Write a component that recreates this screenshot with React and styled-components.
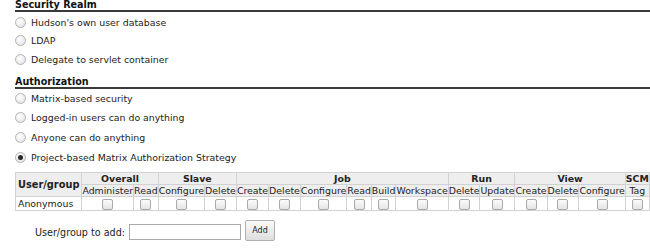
import React from "react";
import styled, { createGlobalStyle } from "styled-components";

const GlobalStyle = createGlobalStyle`
  html, body {
    margin: 0;
    padding: 0;
    background: #fff;
  }
  body {
    font-family: "DejaVu Sans", Verdana, sans-serif;
    font-size: 9.4px;
    color: #222;
  }
`;

const Page = styled.div`
  width: 650px;
  height: 249px;
  overflow: hidden;
  padding-left: 15px;
  box-sizing: border-box;
`;

const SectionHeader = styled.div`
  font-weight: bold;
  font-size: 9.6px;
  color: #111;
  padding-top: ${(p) => p.top || 0}px;
  height: 9px;
  line-height: 9px;
  border-bottom: 2px solid #3a3a3a;
  padding-bottom: 1px;
`;

const OptionList = styled.div`
  display: flex;
  flex-direction: column;
  gap: ${(p) => p.gap}px;
  padding-top: ${(p) => p.top}px;
`;

const Option = styled.label`
  display: flex;
  align-items: center;
  gap: 5px;
  height: 12px;
`;

const Radio = styled.span`
  width: 11px;
  height: 11px;
  border-radius: 50%;
  box-sizing: border-box;
  border: 1px solid #b4b4b4;
  background: radial-gradient(circle at 40% 35%, #ffffff 0%, #f1f1f1 45%, #dcdcdc 100%);
  display: flex;
  align-items: center;
  justify-content: center;
  flex: none;
  &::after {
    content: "";
    width: 5px;
    height: 5px;
    border-radius: 50%;
    background: ${(p) => (p.checked ? "#2a2a2a" : "transparent")};
  }
`;

const Matrix = styled.table`
  border-collapse: collapse;
  margin-top: 9px;
  font-size: 9.4px;
`;

const Th = styled.th`
  background: #eeeeee;
  border: 1px solid #d2d2d2;
  font-weight: ${(p) => (p.bold ? "bold" : "normal")};
  padding: 0;
  height: 11px;
  line-height: 11px;
  white-space: nowrap;
  color: #222;
`;

const UserHead = styled(Th)`
  font-weight: bold;
  font-size: 9.8px;
  padding: 0 2px;
`;

const Td = styled.td`
  border: 1px solid #d2d2d2;
  padding: 0;
  height: 13px;
  text-align: ${(p) => (p.left ? "left" : "center")};
  padding-left: ${(p) => (p.left ? "2px" : 0)};
  vertical-align: middle;
`;

const Check = styled.span`
  display: inline-block;
  width: 11px;
  height: 11px;
  box-sizing: border-box;
  border: 1px solid #a9a9a9;
  border-radius: 2px;
  background: linear-gradient(#fbfbfb, #e4e4e4);
  vertical-align: middle;
  margin-top: 1px;
`;

const AddRow = styled.div`
  display: flex;
  align-items: center;
  padding-left: 20px;
  margin-top: 12px;
  gap: 4px;
`;

const AddLabel = styled.span`
  font-size: 9.6px;
  color: #222;
`;

const TextBox = styled.input`
  width: 112px;
  height: 16px;
  box-sizing: border-box;
  border: 1px solid #a9a9a9;
  padding: 0 2px;
  font: inherit;
`;

const AddButton = styled.button`
  width: 30px;
  height: 21px;
  margin-top: -3px;
  box-sizing: border-box;
  border: 1px solid #b0b0b0;
  border-radius: 2px;
  background: linear-gradient(#fafafa, #dedede);
  font-family: "DejaVu Sans", Verdana, sans-serif;
  font-size: 8px;
  color: #222;
  padding: 0;
`;

const groups = [
  { name: "Overall", perms: ["Administer", "Read"] },
  { name: "Slave", perms: ["Configure", "Delete"] },
  { name: "Job", perms: ["Create", "Delete", "Configure", "Read", "Build", "Workspace"] },
  { name: "Run", perms: ["Delete", "Update"] },
  { name: "View", perms: ["Create", "Delete", "Configure"] },
  { name: "SCM", perms: ["Tag"] },
];

const allPerms = groups.flatMap((g) => g.perms.map((p) => ({ key: g.name + p, label: p })));

export default function App() {
  return (
    <Page>
      <GlobalStyle />
      <SectionHeader>Security Realm</SectionHeader>
      <OptionList gap={6.5} top={4}>
        <Option><Radio />Hudson's own user database</Option>
        <Option><Radio />LDAP</Option>
        <Option><Radio />Delegate to servlet container</Option>
      </OptionList>
      <SectionHeader top={12}>Authorization</SectionHeader>
      <OptionList gap={7.7} top={3}>
        <Option><Radio />Matrix-based security</Option>
        <Option><Radio />Logged-in users can do anything</Option>
        <Option><Radio />Anyone can do anything</Option>
        <Option><Radio checked />Project-based Matrix Authorization Strategy</Option>
      </OptionList>
      <Matrix>
        <thead>
          <tr>
            <UserHead rowSpan={2}>User/group</UserHead>
            {groups.map((g) => (
              <Th bold colSpan={g.perms.length} key={g.name}>{g.name}</Th>
            ))}
          </tr>
          <tr>
            {allPerms.map((p) => (
              <Th key={p.key}>{p.label}</Th>
            ))}
          </tr>
        </thead>
        <tbody>
          <tr>
            <Td left>Anonymous</Td>
            {allPerms.map((p) => (
              <Td key={p.key}><Check /></Td>
            ))}
          </tr>
        </tbody>
      </Matrix>
      <AddRow>
        <AddLabel>User/group to add:</AddLabel>
        <TextBox />
        <AddButton>Add</AddButton>
      </AddRow>
    </Page>
  );
}
